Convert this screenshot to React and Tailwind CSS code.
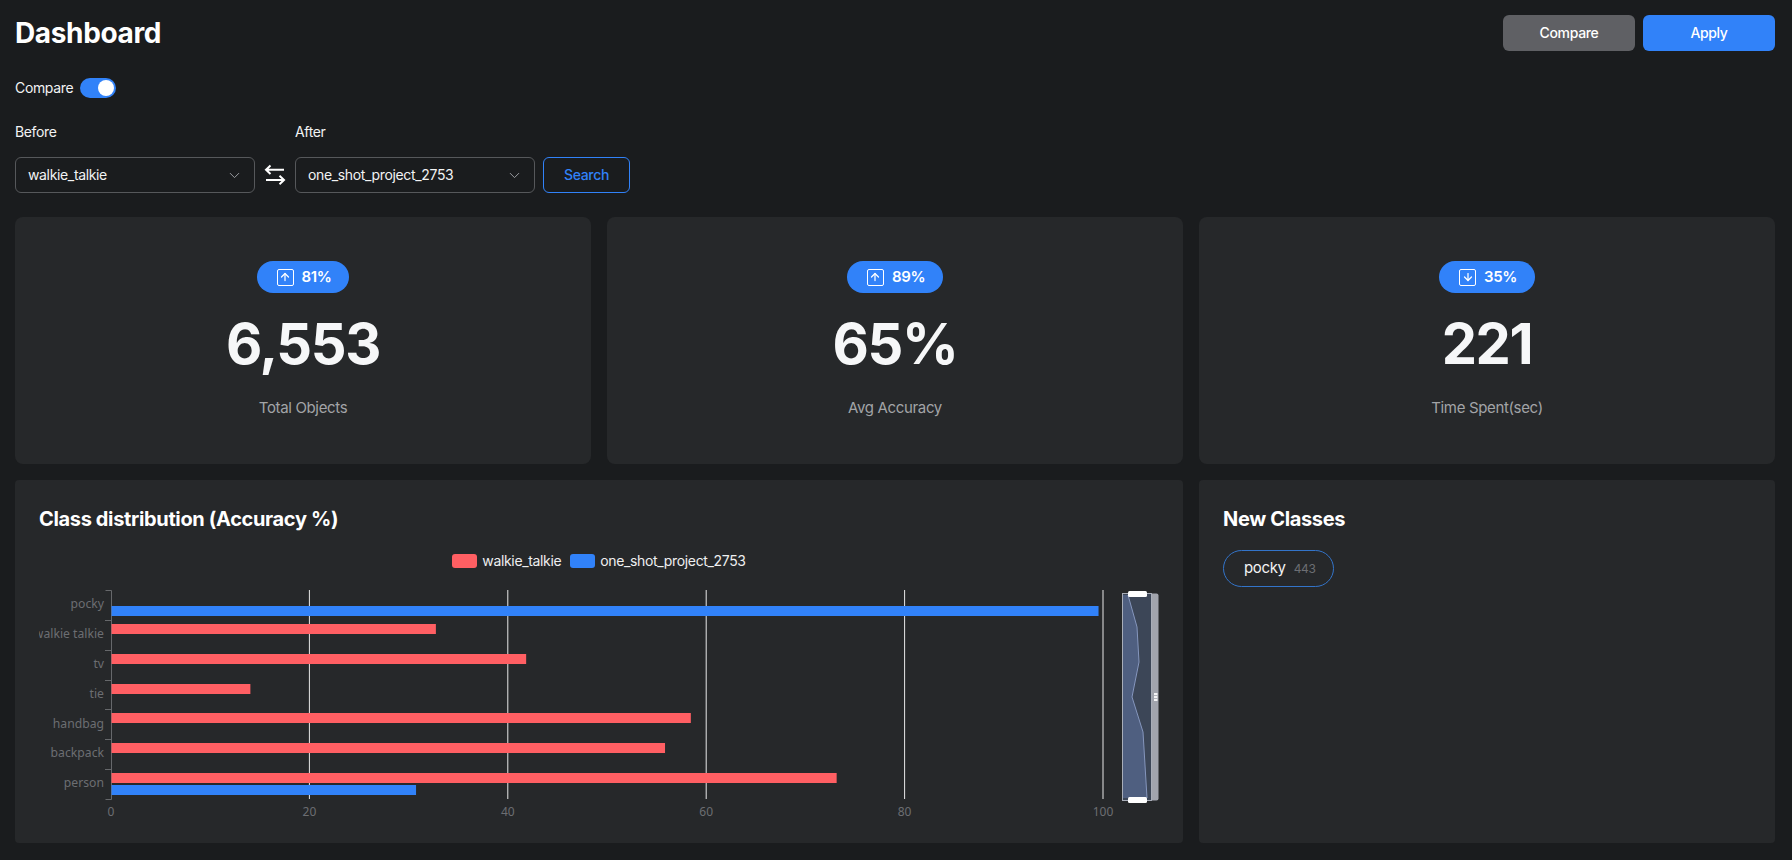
import React from "react";
import { ChevronDown, ArrowUp, ArrowDown } from "lucide-react";

const stats = [
  { dir: "up", pct: "81%", value: "6,553", label: "Total Objects" },
  { dir: "up", pct: "89%", value: "65%", label: "Avg Accuracy" },
  { dir: "down", pct: "35%", value: "221", label: "Time Spent(sec)" },
];

const RED = "#ff5f63";
const BLUE = "#3182f9";

// y positions are measured on the page, the chart viewBox uses page coords
const bars = [
  { y: 606, w: 99.5, c: BLUE },
  { y: 624, w: 32.7, c: RED },
  { y: 654, w: 41.8, c: RED },
  { y: 684, w: 14, c: RED },
  { y: 713, w: 58.4, c: RED },
  { y: 743, w: 55.8, c: RED },
  { y: 773, w: 73.1, c: RED },
  { y: 785, w: 30.7, c: BLUE },
];

const cats = [
  ["pocky", 609],
  ["walkie talkie", 639],
  ["tv", 669],
  ["tie", 699],
  ["handbag", 729],
  ["backpack", 758],
  ["person", 788],
];

const x0 = 111;
const unit = 9.92;

const Select = ({ value }) => (
  <div className="flex h-[36px] w-[240px] items-center justify-between rounded-md border border-[#56585b] pl-[12px] pr-[11px] text-[14px] text-[#f2f3f4]">
    <span className="pb-[2px]">{value}</span>
    <ChevronDown size={17} color="#9a9da1" strokeWidth={1.4} />
  </div>
);

const StatCard = ({ dir, pct, value, label }) => (
  <div className="flex h-[247px] flex-1 flex-col items-center rounded-lg bg-[#26282a] pt-[44px]">
    <div className="flex h-[32px] items-center gap-[8px] rounded-full bg-[#3182f9] pl-[20px] pr-[18px] text-[15px] font-semibold text-white">
      <span className="flex h-[17px] w-[17px] items-center justify-center rounded-[2px] border-[1.5px] border-white">
        {dir === "up" ? <ArrowUp size={12} strokeWidth={2.5} /> : <ArrowDown size={12} strokeWidth={2.5} />}
      </span>
      {pct}
    </div>
    <div className="mt-[9px] text-[56px] font-bold leading-[84px] tracking-[-1.4px] text-[#f6f7f8]">{value}</div>
    <div className="mt-[11px] text-[15px] leading-[22px] text-[#a2a4a7]">{label}</div>
  </div>
);

const Chart = () => (
  <svg viewBox="39 575 1120 250" className="block h-[250px] w-[1120px] font-['Noto_Sans',sans-serif] tracking-normal">
    {[20, 40, 60, 80, 100].map((v) => (
      <line key={v} x1={x0 + v * unit} x2={x0 + v * unit} y1="590" y2="799" stroke="#e8e8e8" strokeWidth="1" />
    ))}
    <path d="M105.500 590.500H111.500V799.500H105.500" fill="none" stroke="#66686b" strokeWidth="1" />
    {[620, 650, 680, 709, 739, 769].map((y) => (
      <line key={y} x1="105" x2="111" y1={y + 0.5} y2={y + 0.5} stroke="#66686b" />
    ))}
    {bars.map((b) => (
      <rect key={b.y} x={x0 + 0.5} y={b.y} width={b.w * unit} height="10" fill={b.c} />
    ))}
    <clipPath id="lbl">
      <rect x="39" y="575" width="66" height="250" />
    </clipPath>
    <g clipPath="url(#lbl)">
      {cats.map(([t, y]) => (
        <text key={t} x="104" y={y - 1} textAnchor="end" fontSize="12.200" fill="#6c6e72">
          {t}
        </text>
      ))}
    </g>
    {[0, 20, 40, 60, 80, 100].map((v) => (
      <text key={v} x={x0 + v * unit} y="816" textAnchor="middle" fontSize="12" fill="#6c6e72">
        {v}
      </text>
    ))}

    {/* zoom slider */}
    <rect x="1122.500" y="593.500" width="36" height="207" rx="2" fill="#a1a4ad" />
    <rect x="1122.500" y="593.500" width="29" height="207" fill="#3c4657" stroke="#a8adb8" />
    <polygon points="1128,595 1137,627 1139,662 1132,697 1143,732 1147,798 1123,798 1123,595" fill="#4f5f80" />
    <polyline points="1128,595 1137,627 1139,662 1132,697 1143,732 1147,798" fill="none" stroke="#8596bd" strokeWidth="1" />
    <rect x="1128" y="591" width="19" height="6" rx="1.500" fill="#ffffff" />
    <rect x="1128" y="797" width="19" height="6" rx="1.500" fill="#ffffff" />
    <rect x="1154" y="693" width="3.500" height="8" fill="#f4f4f6" />
    <path d="M1154 695.500H1157.500M1154 698.500H1157.500" stroke="#a1a4ad" strokeWidth="0.800" />
  </svg>
);

export default function App() {
  return (
    <div className="h-[860px] w-[1792px] overflow-hidden bg-[#1a1c1e] pl-[15px] pr-[17px] font-['Inter',sans-serif] tracking-[-0.35px] text-white">
      <div className="flex items-center justify-between pt-[15px]">
        <h1 className="text-[28px] font-bold leading-[36px]">Dashboard</h1>
        <div className="flex gap-[8px]">
          <button className="h-[36px] w-[132px] rounded-md bg-[#5f6064] pb-[2px] text-[14px] font-medium">Compare</button>
          <button className="h-[36px] w-[132px] rounded-md bg-[#3182f9] pb-[2px] text-[14px] font-medium">Apply</button>
        </div>
      </div>

      <div className="mt-[27px] flex items-center gap-[7px] text-[14px] leading-[20px] text-[#f2f3f4]">
        <span>Compare</span>
        <span className="flex h-[20px] w-[36px] items-center justify-end rounded-full bg-[#3182f9] pr-[2px]">
          <span className="h-[16px] w-[16px] rounded-full bg-white" />
        </span>
      </div>

      <div className="mt-[23px] flex text-[14px] leading-[22px] text-[#f2f3f4]">
        <span className="w-[280px]">Before</span>
        <span>After</span>
      </div>

      <div className="mt-[14px] flex items-center">
        <Select value="walkie_talkie" />
        <svg width="40" height="24" viewBox="0 0 40 24" fill="none" stroke="#ffffff" strokeWidth="2">
          <path d="M11 6.700H29M15.500 2.500L11 6.700L15.500 11" />
          <path d="M29 17H11M24.500 12.800L29 17L24.500 21.200" />
        </svg>
        <Select value="one_shot_project_2753" />
        <button className="ml-[8px] h-[36px] w-[87px] rounded-md border border-[#3182f9] pb-[2px] text-[14px] font-medium text-[#3182f9]">
          Search
        </button>
      </div>

      <div className="mt-[24px] flex gap-[16px]">
        {stats.map((s) => (
          <StatCard key={s.label} {...s} />
        ))}
      </div>

      <div className="mt-[16px] flex gap-[16px]">
        <div className="h-[363px] w-[1168px] rounded-sm bg-[#26282a] px-[24px] pt-[25px]">
          <h2 className="text-[20px] font-bold leading-[28px]">Class distribution (Accuracy %)</h2>
          <div className="mt-[19px] flex h-[18px] items-center justify-center gap-[9px] text-[14px] leading-[18px] text-[#eeeff0]">
            <span className="flex items-center gap-[5px]">
              <span className="h-[14px] w-[25px] rounded-[3px] bg-[#ff5f63]" />
              walkie_talkie
            </span>
            <span className="flex items-center gap-[5px]">
              <span className="h-[14px] w-[25px] rounded-[3px] bg-[#3182f9]" />
              one_shot_project_2753
            </span>
          </div>
          <div className="mt-[5px]">
            <Chart />
          </div>
        </div>
        <div className="h-[363px] flex-1 rounded-sm bg-[#26282a] px-[24px] pt-[25px]">
          <h2 className="text-[20px] font-bold leading-[28px]">New Classes</h2>
          <div className="mt-[17px] flex h-[37px] w-[111px] items-center gap-[8px] rounded-full border border-[#3374c9] pl-[20px]">
            <span className="text-[15px] text-[#f2f3f4]">pocky</span>
            <span className="text-[12px] text-[#6c6e72]">443</span>
          </div>
        </div>
      </div>
    </div>
  );
}
